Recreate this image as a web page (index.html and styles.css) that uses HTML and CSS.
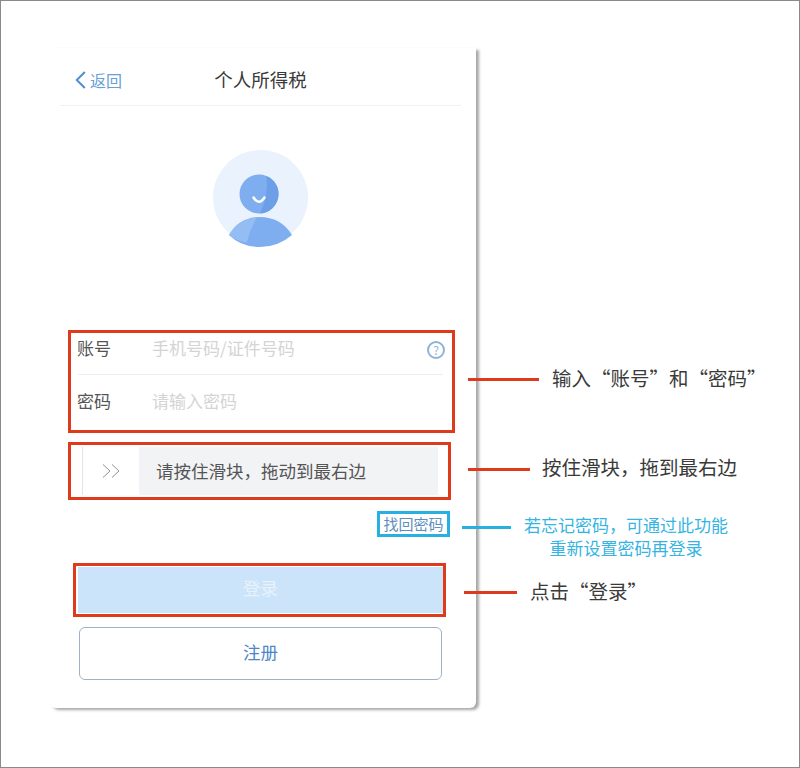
FILE: index.html
```html
<!DOCTYPE html>
<html lang="zh-CN">
<head>
    <meta charset="UTF-8">
    <meta name="viewport" content="width=device-width, initial-scale=1.0">
    <title>个人所得税 登录指引</title>
    <link rel="stylesheet" href="styles.css">
</head>
<body>
    <div class="frame">
        <div class="phone-card">
            <header class="nav-bar">
                <span class="nav-back">
                    <svg class="back-icon" viewBox="0 0 11 18" width="11" height="18">
                        <path d="M9.800 1 L1.800 9 L9.800 17" fill="none" stroke="#4f8fd0" stroke-width="2"/>
                    </svg>
                    返回
                </span>
                <span class="nav-title">个人所得税</span>
            </header>

            <div class="avatar">
                <svg viewBox="0 0 95 97" width="95" height="97">
                    <circle cx="47.500" cy="47.500" r="47.500" fill="#e9f2fd"/>
                    <circle cx="46" cy="44" r="19.500" fill="#7eaef0"/>
                    <path d="M53.500 26 A19.500 19.500 0 0 1 47 63.500 Q56 45 53.500 26 Z" fill="#6d9fe8"/>
                    <path d="M40.500 47.500 Q46 56 51.500 47.500" fill="none" stroke="#ffffff" stroke-width="2.500" stroke-linecap="round"/>
                    <path d="M16 85 Q26 67 46.500 67 Q68 67 79 85 Q65 97 47 97 Q28 97 16 85 Z" fill="#7eaef0"/>
                    <path d="M16 85 Q26 69 43.700 67.500 Q37 80 33.700 92.500 Q23 91 16 85 Z" fill="#93bdf3"/>
                </svg>
            </div>

            <div class="form-box">
                <div class="form-row form-row-line">
                    <span class="form-label">账号</span>
                    <span class="form-hint">手机号码/证件号码</span>
                    <span class="help-icon">?</span>
                </div>
                <div class="form-row">
                    <span class="form-label">密码</span>
                    <span class="form-hint">请输入密码</span>
                </div>
            </div>

            <div class="slider-box">
                <div class="slider">
                    <div class="slider-handle">
                        <svg viewBox="0 0 18 14" width="18" height="14">
                            <path d="M1 0.500 L8 7 L1 13.500 M10 0.500 L17 7 L10 13.500" fill="none" stroke="#8d9196" stroke-width="1"/>
                        </svg>
                    </div>
                    <div class="slider-text">请按住滑块，拖动到最右边</div>
                </div>
            </div>

            <div class="forgot-row">
                <span class="forgot-link">找回密码</span>
            </div>

            <div class="login-box">
                <div class="login-btn">登录</div>
            </div>
            <div class="register-btn">注册</div>
        </div>

        <!-- Callouts on the right, each with its leader line -->
        <div class="callout callout-account">
            <span class="leader"></span>
            <span class="callout-text">输入“账号”和“密码”</span>
        </div>
        <div class="callout callout-slider">
            <span class="leader"></span>
            <span class="callout-text">按住滑块，拖到最右边</span>
        </div>
        <div class="callout callout-forgot">
            <span class="leader"></span>
            <span class="callout-text">若忘记密码，可通过此功能<br>重新设置密码再登录</span>
        </div>
        <div class="callout callout-login">
            <span class="leader"></span>
            <span class="callout-text">点击“登录”</span>
        </div>
    </div>
</body>
</html>
```

FILE: styles.css
```css
* {
    margin: 0;
    padding: 0;
    box-sizing: border-box;
}

body {
    width: 800px;
    height: 768px;
    overflow: hidden;
    background: #fff;
    font-family: "Noto Sans CJK SC", "Liberation Sans", sans-serif;
}

.frame {
    position: relative;
    width: 800px;
    height: 768px;
    padding: 47px 0 0 49px;
    border: 1px solid #8a8a8a;
}

/* Phone screen */
.phone-card {
    width: 426px;
    height: 660px;
    padding: 0 15px 0 10px;
    background: #fff;
    border-radius: 0 0 6px 6px;
    box-shadow: 3px 2px 3px rgba(0, 0, 0, 0.35);
}

.nav-bar {
    position: relative;
    display: flex;
    justify-content: center;
    align-items: center;
    height: 58px;
    border-bottom: 1px solid #f1f1f1;
}

.nav-back {
    position: absolute;
    left: 15px;
    top: 20px;
    display: flex;
    align-items: center;
    gap: 4px;
    font-size: 16px;
    color: #6a9fd4;
}

.nav-title {
    margin-top: 4px;
    font-size: 18.500px;
    color: #3a3a3a;
}

.avatar {
    display: flex;
    justify-content: center;
    height: 97px;
    margin-top: 44px;
}

.form-box {
    width: 387px;
    height: 103px;
    margin: 83px 0 0 8px;
    padding: 0 9px 0 7px;
    border: 3px solid #de3a1c;
}

.form-row {
    display: flex;
    align-items: center;
    height: 55px;
}

.form-row-line {
    height: 42px;
    padding-bottom: 9px;
    border-bottom: 1px solid #eeeeee;
}

.form-label {
    width: 74px;
    margin: 0 0 4px -1px;
    font-size: 17px;
    color: #555;
}

.form-hint {
    flex: 1;
    margin: 0 0 4px 1px;
    font-size: 17px;
    color: #d4d4d4;
}

.help-icon {
    width: 18px;
    height: 18px;
    margin: 2px -2px 0 0;
    border: 2px solid #8db4d6;
    border-radius: 50%;
    font-size: 12px;
    line-height: 14px;
    text-align: center;
    color: #8db4d6;
}

.slider-box {
    width: 383px;
    height: 58px;
    margin: 9px 0 0 8px;
    padding: 2px 10px 2px 11px;
    border: 3px solid #de3a1c;
}

.slider {
    display: flex;
    height: 48px;
    border-left: 1px solid #e4e4e4;
}

.slider-handle {
    display: flex;
    justify-content: center;
    align-items: center;
    width: 56px;
    background: #fff;
}

.slider-text {
    flex: 1;
    padding-left: 17px;
    font-size: 17.500px;
    line-height: 48px;
    color: #555;
    background: #f2f3f5;
}

.forgot-row {
    display: flex;
    justify-content: flex-end;
    width: 390px;
    margin-top: 11px;
}

.forgot-link {
    width: 73px;
    height: 26px;
    border: 3px solid #27b0e0;
    font-size: 15px;
    line-height: 20px;
    text-align: center;
    color: #5d8fbe;
}

.login-box {
    width: 373px;
    height: 54px;
    margin: 26px 0 0 13px;
    border: 3px solid #de3a1c;
}

.login-btn {
    height: 46px;
    margin: 1px 0 1px 2px;
    font-size: 17.500px;
    line-height: 42px;
    text-align: center;
    color: #e7f2fc;
    background: #cce4fa;
}

.register-btn {
    width: 363px;
    height: 53px;
    margin: 10px 0 0 19px;
    border: 1px solid #9db2c8;
    border-radius: 6px;
    font-size: 17.500px;
    line-height: 47px;
    text-align: center;
    color: #4f86c6;
}

/* Callouts */
.callout {
    position: absolute;
    display: flex;
    align-items: center;
}

.leader {
    height: 3px;
    background: #de3a1c;
}

.callout-text {
    margin-bottom: 2px;
    font-size: 19.500px;
    line-height: 28px;
    color: #3a3a3a;
    white-space: nowrap;
}

.callout-account {
    left: 467px;
    top: 363px;
}

.callout-account .leader {
    width: 71px;
    margin-right: 13px;
}

.callout-slider {
    left: 467px;
    top: 452px;
}

.callout-slider .callout-text {
    margin-bottom: 4px;
}

.callout-slider .leader {
    width: 62px;
    margin-right: 12px;
}

.callout-forgot {
    left: 461px;
    top: 512px;
    align-items: flex-start;
}

.callout-forgot .leader {
    width: 49px;
    margin: 13px 13px 0 0;
    background: #27b0e0;
}

.callout-forgot .callout-text {
    font-size: 17px;
    line-height: 23px;
    text-align: center;
    color: #35b4e4;
}

.callout-login {
    left: 463px;
    top: 576px;
}

.callout-login .leader {
    width: 53px;
    margin-right: 13px;
}
```
